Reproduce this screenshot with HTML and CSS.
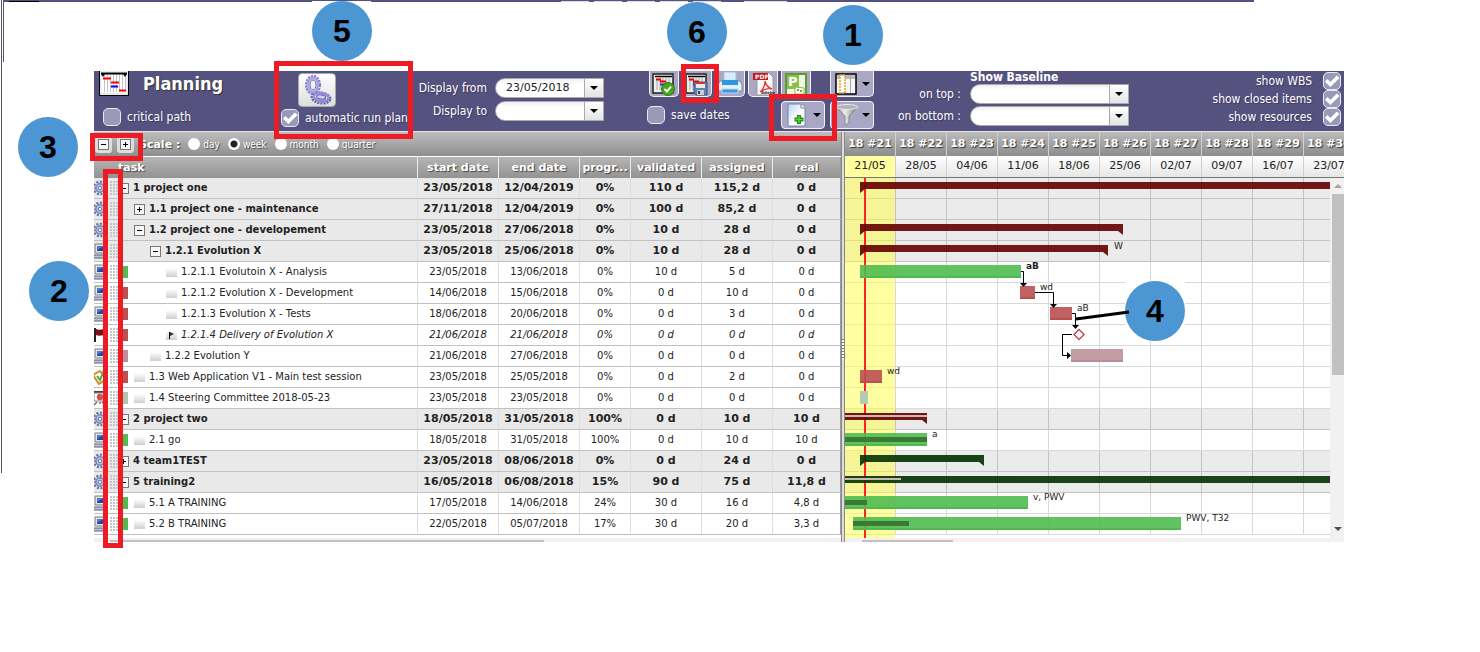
FILE: index.html
```html
<!DOCTYPE html>
<html lang="en">
<head>
<meta charset="utf-8">
<title>Planning</title>
<link rel="stylesheet" href="styles.css">
</head>
<body>
<svg class="defs" aria-hidden="true">
  <defs>
    <pattern id="dots" width="3" height="3" patternUnits="userSpaceOnUse"><rect width="2" height="2" fill="#c4c4c4"/></pattern>
    <linearGradient id="leafFill" x1="0" y1="0" x2="0" y2="1"><stop offset="0" stop-color="#fff"/><stop offset="1" stop-color="#cfcfcf"/></linearGradient>
    <linearGradient id="metal" x1="0" x2="1"><stop offset="0" stop-color="#888"/><stop offset=".4" stop-color="#eee"/><stop offset="1" stop-color="#777"/></linearGradient>
    <linearGradient id="pageFill" x1="0" y1="0" x2="1" y2="1"><stop offset="0" stop-color="#bcd6f2"/><stop offset=".6" stop-color="#fff"/></linearGradient>
  </defs>
  <symbol id="gear" viewBox="0 0 16 16">
    <circle cx="8" cy="8" r="6.3" fill="none" stroke="#5f6f9f" stroke-width="2.2" stroke-dasharray="2 1.6"/>
    <circle cx="8" cy="8" r="4.2" fill="#b9c3df" stroke="#7483b3" stroke-width="1.6"/>
    <circle cx="8" cy="8" r="1.8" fill="#eef" stroke="#6474a6" stroke-width="1"/>
  </symbol>
  <symbol id="pc" viewBox="0 0 16 16">
    <path d="M3 1h11v9H3z" fill="#e6e6dc" stroke="#777" stroke-width="1"/>
    <path d="M5 3h7v5H5z" fill="#1f46a8"/><path d="M5 3h7L5 7z" fill="#4c78d0"/>
    <path d="M2 12h12l-1 3H1z" fill="#bcc4dc" stroke="#555f82" stroke-width="1"/>
  </symbol>
  <symbol id="flag" viewBox="0 0 16 16">
    <path d="M3 1v14" stroke="#222" stroke-width="2"/><path d="M4 2c4 2 7-1 11 1v6c-4-2-7 1-11-1z" fill="#7b1218"/>
  </symbol>
  <symbol id="test" viewBox="0 0 16 16">
    <path d="M1 6l7-4 6 8-7 5z" fill="#fff" stroke="#d08a28" stroke-width="2"/><path d="M5 7l3 4 4-9" fill="none" stroke="#4fae3b" stroke-width="2"/><path d="M10 1l5 2-3 6z" fill="#78aee0"/>
  </symbol>
  <symbol id="meet" viewBox="0 0 16 16">
    <path d="M0 1h16v2H0z" fill="#444"/><path d="M2 3h12v8H2z" fill="#fff" stroke="#888"/><circle cx="8" cy="7" r="3.2" fill="#d8483f"/><path d="M8 7V4l3 2z" fill="#5f88c8"/><path d="M5 12l-3 3M10 12l3 3M8 12v2" stroke="#666" stroke-width="1.3"/>
  </symbol>
  <symbol id="grip" viewBox="0 0 9 14"><rect x="0" y="0" width="8" height="14" fill="url(#dots)"/></symbol>
  <symbol id="minus" viewBox="0 0 11 11"><rect x=".5" y=".5" width="10" height="10" fill="#f7f7f7" stroke="#777"/><path d="M3 5.5h5" stroke="#000"/></symbol>
  <symbol id="plus" viewBox="0 0 11 11"><rect x=".5" y=".5" width="10" height="10" fill="#f7f7f7" stroke="#777"/><path d="M3 5.5h5M5.500 3v5" stroke="#000"/></symbol>
  <symbol id="leaf" viewBox="0 0 11 11"><rect y="1" width="11" height="9" fill="url(#leafFill)"/></symbol>
  <symbol id="mile" viewBox="0 0 11 11"><rect y="1" width="11" height="9" fill="url(#leafFill)"/><path d="M3.500 2v7" stroke="#000"/><path d="M4 2l4 2-4 2z" fill="#333"/></symbol>
  <symbol id="chart" viewBox="0 0 30 25">
    <rect x=".5" y="-3" width="29" height="27.500" fill="#e9e9e9" stroke="#000"/><rect x="2.500" y="1" width="25" height="21" fill="#fff"/>
    <path d="M5.500 3v18M8.500 3v18M11.500 3v18M14.500 3v18M17.500 3v18M20.500 3v18M23.500 3v18M26.500 3v18" stroke="#c4c4c4"/>
    <path d="M2 2.500h26" stroke="#000" stroke-width="2"/><path d="M2 3l2 3 2-3zM24 3l2 3 2-3z"/>
    <path d="M4 7.500h8M12 11.500h8M20 19.500h7" stroke="#f00" stroke-width="2"/><path d="M12 15.500h7" stroke="#00f" stroke-width="2"/>
  </symbol>
  <symbol id="mini" viewBox="0 0 24 24">
    <rect x="1" y="2" width="20" height="19" fill="#eee" stroke="#222" stroke-width="1.500"/>
    <path d="M5 6v12M8 6v12M11 6v12M14 6v12M17 6v12" stroke="#aaa"/><path d="M3 4.500h17" stroke="#000" stroke-width="1.500"/>
    <path d="M4 7.500h5M8 9.500h6" stroke="#e00" stroke-width="2"/><path d="M8 12.500h6" stroke="#22f" stroke-width="2"/>
  </symbol>
</svg>

<div class="frame"><i class="edge"></i><i class="purple"></i><i class="ink"></i><i class="patch"></i>
  <i class="tabs"><b></b><b></b><b></b><b></b><b></b><b class="wide"></b></i></div>

<main class="board">
  <header class="toolbar">
    <section class="title">
      <div class="name"><svg class="logo"><use href="#chart"/></svg><h1>Planning</h1></div>
      <label class="check"><input type="checkbox">critical path</label>
    </section>
    <section class="run">
      <button class="gears" type="button" aria-label="Run plan">
        <svg width="32" height="32" viewBox="0 0 32 32" fill="none">
          <ellipse cx="12" cy="11" rx="6.500" ry="8.500" stroke="#7d78c8" stroke-width="3" stroke-dasharray="2 1"/>
          <ellipse cx="12" cy="11" rx="5" ry="7" stroke="#a8a4e2" stroke-width="2.500"/>
          <ellipse cx="12" cy="11" rx="3" ry="5" stroke="#6f69bb"/>
          <g transform="rotate(8 20 24)">
            <ellipse cx="20" cy="24" rx="9" ry="5" stroke="#6761b4" stroke-width="3" stroke-dasharray="2 1"/>
            <ellipse cx="20" cy="23" rx="7.500" ry="4" stroke="#948fd8" stroke-width="2.500"/>
            <ellipse cx="20" cy="23" rx="4.500" ry="2" stroke="#5b55a6" fill="#d5d3f2"/>
          </g>
        </svg>
      </button>
      <label class="check"><input type="checkbox" checked>automatic run plan</label>
    </section>
    <section class="dates">
      <label for="from">Display from</label><span class="combo"><select id="from"><option>23/05/2018</option></select></span>
      <label for="to">Display to</label><span class="combo"><select id="to"><option></option></select></span>
    </section>
    <section class="tools">
      <div class="tools-top">
        <button class="tool" type="button" aria-label="Validate planning"><svg width="24" height="24"><use href="#mini"/><circle cx="16" cy="17" r="6.500" fill="#45a51e" stroke="#2d7d10"/><path d="M12.500 17l2.500 2.500 4-5" fill="none" stroke="#fff" stroke-width="2"/></svg></button>
        <button class="tool" type="button" aria-label="Save planning"><svg width="24" height="24"><use href="#mini"/><path d="M9 10h13v13H11l-2-2z" fill="#5d84b4" stroke="#34557f"/><path d="M11 10h9v6h-9z" fill="#e9e9e9"/><path d="M11 10h9v2h-9z" fill="#d33"/><path d="M12 18h7v5h-7z" fill="#ccc"/><path d="M13 19h2v3h-2z" fill="#345"/></svg></button>
        <button class="tool" type="button" aria-label="Print"><svg width="26" height="24"><path d="M7 0h12v11H7z" fill="#d7ecfa" stroke="#9cc3e2"/><path d="M3 9h20l2 4v6H1v-6z" fill="#e9eef4" stroke="#7d92ab"/><path d="M5 8h16v5H5z" fill="#2f96e0"/><path d="M5 17h16v4H5z" fill="#3a9be3" stroke="#b8d9f2"/></svg></button>
        <button class="tool" type="button" aria-label="Export PDF"><svg width="24" height="24"><path d="M6 1h12l4 4v18H6z" fill="#fafafa" stroke="#999"/><path d="M2 1h15v7H2z" fill="#c4181b"/><text x="4" y="7" class="pdf">PDF</text><path d="M9 20c3-2 5-7 5-11 1 5 4 7 7 8-4-1-9 1-12 3z" fill="none" stroke="#e33" stroke-width="1.300"/><text x="10" y="22" class="adobe">Adobe</text></svg></button>
        <button class="tool" type="button" aria-label="Export project"><svg width="24" height="24"><path d="M2 2h20v21H2z" fill="#eef6e2" stroke="#5f9c2a" stroke-width="2"/><path d="M3 3h12v14H3z" fill="#8bbd4c"/><text x="4" y="14" class="proj">P</text><path d="M11 15l9 1v6h-9z" fill="#fff" stroke="#88b94f"/><path d="M13 17h2v2h-2zM16 18h2v2h-2z" fill="#6fa533"/></svg></button>
        <button class="tool menu cols" type="button" aria-label="Columns"><svg width="22" height="22"><rect x="1" y="1" width="20" height="20" fill="#f6f6f6" stroke="#000" stroke-width="1.500"/><path d="M2 2h18v4H2z" fill="#bbb"/><path d="M15.500 2v18" stroke="#aaa"/><rect x="5" y="2" width="5" height="18" fill="#fff" stroke="#e6a020" stroke-width="1.500" stroke-dasharray="2 1"/></svg></button>
      </div>
      <div class="tools-low">
        <label class="check"><input type="checkbox">save dates</label>
        <button class="tool menu add" type="button" aria-label="New item"><svg width="22" height="24"><path d="M2 1h13l4 4v18H2z" fill="url(#pageFill)" stroke="#6d86a8"/><path d="M15 1v4h4" fill="#fff" stroke="#6d86a8"/><path d="M13 12v9M8.500 16.500h9" stroke="#1d8a14" stroke-width="4"/><path d="M13 13v7M9.500 16.500h7" stroke="#5fd048" stroke-width="1.500"/></svg></button>
        <button class="tool menu filter" type="button" aria-label="Filter"><svg width="24" height="24"><path d="M1 4l9 9v9l4-2v-7l9-9z" fill="url(#metal)" stroke="#888"/><ellipse cx="12" cy="4" rx="11" ry="2.500" fill="#b5b5b5" stroke="#e8e8e8"/></svg></button>
      </div>
    </section>
    <section class="baseline">
      <h2>Show Baseline</h2>
      <label for="top">on top :</label><span class="combo"><select id="top"><option></option></select></span>
      <label for="bottom">on bottom :</label><span class="combo"><select id="bottom"><option></option></select></span>
    </section>
    <section class="show">
      <label class="check">show WBS<input type="checkbox" checked></label>
      <label class="check">show closed items<input type="checkbox" checked></label>
      <label class="check">show resources<input type="checkbox" checked></label>
    </section>
  </header>

  <div class="panes">
    <section class="list">
      <form class="scale">
        <button type="button" aria-label="Collapse all"><svg width="11" height="11"><use href="#minus"/></svg></button>
        <button type="button" aria-label="Expand all"><svg width="11" height="11"><use href="#plus"/></svg></button>
        <strong>Scale :</strong>
        <label><input type="radio" name="scale">day</label>
        <label><input type="radio" name="scale" checked>week</label>
        <label><input type="radio" name="scale">month</label>
        <label><input type="radio" name="scale">quarter</label>
      </form>
      <table>
        <colgroup><col><col class="c-date"><col class="c-date"><col class="c-prog"><col class="c-work"><col class="c-work"><col class="c-real"></colgroup>
        <thead><tr><th class="first">task</th><th>start date</th><th>end date</th><th>progr...</th><th>validated</th><th>assigned</th><th>real</th></tr></thead>
        <tbody>
          <tr class="group"><td><div class="task l1"><svg class="ico"><use href="#gear"/></svg><svg class="grip"><use href="#grip"/></svg><svg class="box"><use href="#minus"/></svg>1 project one</div></td><td>23/05/2018</td><td>12/04/2019</td><td>0%</td><td>110 d</td><td>115,2 d</td><td>0 d</td></tr>
          <tr class="group"><td><div class="task l2"><svg class="ico"><use href="#gear"/></svg><svg class="grip"><use href="#grip"/></svg><svg class="box"><use href="#plus"/></svg>1.1 project one - maintenance</div></td><td>27/11/2018</td><td>12/04/2019</td><td>0%</td><td>100 d</td><td>85,2 d</td><td>0 d</td></tr>
          <tr class="group"><td><div class="task l2"><svg class="ico"><use href="#gear"/></svg><svg class="grip"><use href="#grip"/></svg><svg class="box"><use href="#minus"/></svg>1.2 project one - developement</div></td><td>23/05/2018</td><td>27/06/2018</td><td>0%</td><td>10 d</td><td>28 d</td><td>0 d</td></tr>
          <tr class="group"><td><div class="task l3"><svg class="ico"><use href="#pc"/></svg><svg class="grip"><use href="#grip"/></svg><svg class="box"><use href="#minus"/></svg>1.2.1 Evolution X</div></td><td>23/05/2018</td><td>25/06/2018</td><td>0%</td><td>10 d</td><td>28 d</td><td>0 d</td></tr>
          <tr><td><div class="task l4 green"><svg class="ico"><use href="#pc"/></svg><svg class="grip"><use href="#grip"/></svg><svg class="box"><use href="#leaf"/></svg>1.2.1.1 Evolutoin X - Analysis</div></td><td>23/05/2018</td><td>13/06/2018</td><td>0%</td><td>10 d</td><td>5 d</td><td>0 d</td></tr>
          <tr><td><div class="task l4 red"><svg class="ico"><use href="#pc"/></svg><svg class="grip"><use href="#grip"/></svg><svg class="box"><use href="#leaf"/></svg>1.2.1.2 Evolution X - Development</div></td><td>14/06/2018</td><td>15/06/2018</td><td>0%</td><td>0 d</td><td>10 d</td><td>0 d</td></tr>
          <tr><td><div class="task l4 red"><svg class="ico"><use href="#pc"/></svg><svg class="grip"><use href="#grip"/></svg><svg class="box"><use href="#leaf"/></svg>1.2.1.3 Evolution X - Tests</div></td><td>18/06/2018</td><td>20/06/2018</td><td>0%</td><td>0 d</td><td>3 d</td><td>0 d</td></tr>
          <tr class="milestone"><td><div class="task l4 red"><svg class="ico"><use href="#flag"/></svg><svg class="grip"><use href="#grip"/></svg><svg class="box"><use href="#mile"/></svg>1.2.1.4 Delivery of Evolution X</div></td><td>21/06/2018</td><td>21/06/2018</td><td>0%</td><td>0 d</td><td>0 d</td><td>0 d</td></tr>
          <tr><td><div class="task l3 mauve"><svg class="ico"><use href="#pc"/></svg><svg class="grip"><use href="#grip"/></svg><svg class="box"><use href="#leaf"/></svg>1.2.2 Evolution Y</div></td><td>21/06/2018</td><td>27/06/2018</td><td>0%</td><td>0 d</td><td>0 d</td><td>0 d</td></tr>
          <tr><td><div class="task l2 red"><svg class="ico"><use href="#test"/></svg><svg class="grip"><use href="#grip"/></svg><svg class="box"><use href="#leaf"/></svg>1.3 Web Application V1 - Main test session</div></td><td>23/05/2018</td><td>25/05/2018</td><td>0%</td><td>0 d</td><td>2 d</td><td>0 d</td></tr>
          <tr><td><div class="task l2 sage"><svg class="ico"><use href="#meet"/></svg><svg class="grip"><use href="#grip"/></svg><svg class="box"><use href="#leaf"/></svg>1.4 Steering Committee 2018-05-23</div></td><td>23/05/2018</td><td>23/05/2018</td><td>0%</td><td>0 d</td><td>0 d</td><td>0 d</td></tr>
          <tr class="group"><td><div class="task l1"><svg class="ico"><use href="#gear"/></svg><svg class="grip"><use href="#grip"/></svg><svg class="box"><use href="#minus"/></svg>2 project two</div></td><td>18/05/2018</td><td>31/05/2018</td><td>100%</td><td>0 d</td><td>10 d</td><td>10 d</td></tr>
          <tr><td><div class="task l2 green"><svg class="ico"><use href="#pc"/></svg><svg class="grip"><use href="#grip"/></svg><svg class="box"><use href="#leaf"/></svg>2.1 go</div></td><td>18/05/2018</td><td>31/05/2018</td><td>100%</td><td>0 d</td><td>10 d</td><td>10 d</td></tr>
          <tr class="group"><td><div class="task l1"><svg class="ico"><use href="#gear"/></svg><svg class="grip"><use href="#grip"/></svg><svg class="box"><use href="#plus"/></svg>4 team1TEST</div></td><td>23/05/2018</td><td>08/06/2018</td><td>0%</td><td>0 d</td><td>24 d</td><td>0 d</td></tr>
          <tr class="group"><td><div class="task l1"><svg class="ico"><use href="#gear"/></svg><svg class="grip"><use href="#grip"/></svg><svg class="box"><use href="#minus"/></svg>5 training2</div></td><td>16/05/2018</td><td>06/08/2018</td><td>15%</td><td>90 d</td><td>75 d</td><td>11,8 d</td></tr>
          <tr><td><div class="task l2 green"><svg class="ico"><use href="#pc"/></svg><svg class="grip"><use href="#grip"/></svg><svg class="box"><use href="#leaf"/></svg>5.1 A TRAINING</div></td><td>17/05/2018</td><td>14/06/2018</td><td>24%</td><td>30 d</td><td>16 d</td><td>4,8 d</td></tr>
          <tr><td><div class="task l2 green"><svg class="ico"><use href="#pc"/></svg><svg class="grip"><use href="#grip"/></svg><svg class="box"><use href="#leaf"/></svg>5.2 B TRAINING</div></td><td>22/05/2018</td><td>05/07/2018</td><td>17%</td><td>30 d</td><td>20 d</td><td>3,3 d</td></tr>
        </tbody>
      </table>
      <div class="hscroll"><i class="thumb-list"></i></div>
    </section>

    <div class="splitter"></div>

    <section class="gantt">
      <div class="weeks">
        <div class="week now"><b>18 #21</b><span>21/05</span></div>
        <div class="week"><b>18 #22</b><span>28/05</span></div>
        <div class="week"><b>18 #23</b><span>04/06</span></div>
        <div class="week"><b>18 #24</b><span>11/06</span></div>
        <div class="week"><b>18 #25</b><span>18/06</span></div>
        <div class="week"><b>18 #26</b><span>25/06</span></div>
        <div class="week"><b>18 #27</b><span>02/07</span></div>
        <div class="week"><b>18 #28</b><span>09/07</span></div>
        <div class="week"><b>18 #29</b><span>16/07</span></div>
        <div class="week"><b>18 #30</b><span>23/07</span></div>
      </div>
      <div class="body">
        <div class="plot">
          <div class="lane group"></div><div class="lane group"></div><div class="lane group"></div><div class="lane group"></div>
          <div class="lane"></div><div class="lane"></div><div class="lane"></div><div class="lane"></div><div class="lane"></div><div class="lane"></div><div class="lane"></div>
          <div class="lane group"></div><div class="lane"></div><div class="lane group"></div><div class="lane group"></div><div class="lane"></div><div class="lane"></div>
          <svg class="bars">
            <rect width="50" height="360" class="today-col"/>
            <rect x="19" width="2" height="360" fill="#f22"/>
            <g class="p-red">
              <path d="M15 4h2000v7H20l-5 4z"/>
              <path d="M15 46h263v11l-5-4H20l-5 4z"/>
              <path d="M15 67h248v11l-5-4H20l-5 4z"/>
              <path d="M0 235h82v11l-5-4H0z"/>
            </g>
            <g class="p-green">
              <path d="M15 277h124v11l-5-4H20l-5 4z"/>
              <path d="M0 298h2000v7H0z"/>
            </g>
            <path d="M0 237h82v2H0zM0 300h56v2H0z" fill="#c9b9b5"/>
            <g class="t-green"><path d="M15 87h161v13H15zM0 255h82v13H0zM0 318h183v13H0zM8 339h328v13H8z"/></g>
            <path class="t-green-base" d="M15 98h161v2H15zM0 266h82v2H0zM0 329h183v2H0zM8 350h328v2H8z"/>
            <path d="M0 259h82v5H0zM0 322h22v5H0zM8 343h56v5H8z" fill="#3c7937"/>
            <path class="t-red" d="M175 108h15v13h-15zM205 129h22v13h-22zM15 192h22v13H15z"/>
            <path class="t-red-base" d="M175 119h15v2h-15zM205 140h22v2h-22zM15 203h22v2H15z"/>
            <path d="M226 171h52v13h-52z" fill="#c39ba3"/><path d="M226 182h52v2h-52z" fill="#b98d96"/>
            <path d="M15 213h8v13h-8z" fill="#b3cbb4"/>
            <path d="M234 151.500l5 5-5 5-5-5z" fill="#fff" stroke="#c05050" stroke-width="1.500"/>
            <path class="link" d="M176 93.500h2.500V106M190 114.500h18.500V127M227 135.500h3.500V148M227 156.500h-9.500v21h5"/>
            <path d="M175 105h7l-3.500 4zM205 126h7l-3.500 4zM227 147h7l-3.500 4zM222 174v7l4-3.500z"/>
            <text x="269" y="71">W</text><text x="181" y="91" class="strong">aB</text><text x="195" y="112">wd</text><text x="232" y="133">aB</text>
            <text x="42" y="196">wd</text><text x="87" y="259">a</text><text x="188" y="322">v, PWV</text><text x="341" y="343">PWV, T32</text>
          </svg>
        </div>
        <div class="vscroll"><i class="up"></i><i class="thumb"></i><i class="down"></i></div>
      </div>
      <div class="hscroll"><i class="thumb-gantt"></i></div>
    </section>
  </div>
</main>

<div class="mark m5"></div><div class="mark m6"></div><div class="mark mnew"></div><div class="mark m3"></div><div class="mark m2"></div>
<div class="bubble b1">1</div><div class="bubble b2">2</div><div class="bubble b3">3</div><div class="bubble b4"><span>4</span></div><div class="bubble b5">5</div><div class="bubble b6">6</div>
<svg class="pointer" width="56" height="12"><path d="M1 9L54 2" stroke="#000" stroke-width="3"/></svg>
</body>
</html>
```
FILE: styles.css
```css
* { box-sizing: border-box; }
body { margin: 0; position: relative; min-height: 100vh; background: #fff; color: #222; font: 10px "DejaVu Sans", Verdana, sans-serif; }
.defs { position: absolute; width: 0; height: 0; }
h1, h2 { margin: 0; }
button { padding: 0; }

/* window frame remains */
.frame i { position: absolute; display: block; }
.edge { left: 1px; top: 0; width: 1px; height: 473px; background: #555; }
.purple { left: 3px; top: 0; width: 1251px; height: 62px; border-top: 2px solid #55527f; border-left: 1px solid #55527f; }
.ink { left: 9px; top: 1px; width: 30px; height: 1px; background: #000; }
.patch { left: 312px; top: 1px; width: 59px; height: 1px; background: #fff; }
.tabs { left: 561px; top: 1px; gap: 5px; }
.frame .tabs { display: flex; }
.tabs b { width: 28px; height: 1px; background: #dcdce8; }
.tabs .wide { width: 43px; margin-left: 18px; }

.board { padding: 71px 136px 0 94px; }

/* toolbar */
.toolbar { display: flex; height: 60px; background: #55527f; color: #fff; font: 12px "DejaVu Sans Condensed", "DejaVu Sans", sans-serif; overflow: hidden; }
.toolbar label { white-space: nowrap; text-shadow: 1px 1px 1px #3a3760; }
.title { flex: 0 0 181px; padding-left: 5px; }
.name { display: flex; gap: 14px; height: 25px; align-items: center; }
.logo { width: 30px; height: 25px; }
.name h1 { font-size: 18px; line-height: 24px; text-shadow: 1px 1px 1px #333; }
.check { display: flex; align-items: center; gap: 6px; height: 18px; }
.title .check { margin: 12px 0 0 4px; }
.check input { appearance: none; position: relative; margin: 0; width: 18px; height: 18px; flex: none; border: 1px solid #e8e8f2; border-radius: 5px; background: #9b99b8; }
.check input:checked::after { content: ""; position: absolute; inset: 0; background: #fff; clip-path: polygon(6% 54%, 22% 38%, 40% 56%, 80% 16%, 97% 32%, 40% 88%); }
.run { flex: 0 0 139px; padding: 2px 0 0 6px; }
.gears { display: block; margin-left: 17px; width: 38px; height: 34px; border: 1px solid #aaa; border-radius: 4px; background: linear-gradient(#fff, #ddd); }
.run .check { margin-top: 2px; }
.dates { display: grid; grid-template-columns: 73px 109px; grid-auto-rows: 21px; gap: 2px 8px; align-items: center; text-align: right; padding-top: 6px; align-content: start; }
.combo { position: relative; display: block; height: 20px; }
.combo select { appearance: none; display: block; width: 100%; height: 20px; padding: 0 20px 0 10px; border: 1px solid #aaa; border-radius: 10px 0 0 10px; background: linear-gradient(#f0f0f2, #fff 5px); font: 11px "DejaVu Sans", sans-serif; color: #222; }
.combo::before { content: ""; position: absolute; right: 1px; top: 1px; width: 18px; height: 18px; border-left: 1px solid #aaa; background: linear-gradient(#fff, #e4e4e4); pointer-events: none; }
.combo::after, .menu::after { content: ""; border: solid transparent; border-width: 4px 4px 0; border-top-color: #000; }
.combo::after { position: absolute; right: 6px; top: 8px; pointer-events: none; }
.tools { margin-left: 43px; flex: none; }
.tools-top { display: flex; gap: 3px; padding-left: 2px; }
.tool { display: flex; align-items: center; justify-content: center; width: 30px; height: 26px; border: 1px solid #f2f2f8; border-radius: 4px; background: #a9a7c3; }
.tools-top .tool { border-top: 0; border-radius: 0 0 5px 5px; }
.tool.menu { gap: 5px; width: 44px; }
.tool.cols { margin-left: 16px; }
.tools-low { display: flex; align-items: center; margin-top: 4px; }
.tools-low .tool { height: 28px; }
.tools-low .check { width: 134px; }
.tool.add { margin-right: 5px; }
.tool.filter { gap: 3px; }
.pdf { font: bold 6px "DejaVu Sans", sans-serif; fill: #fff; }
.adobe { font: bold 4px "DejaVu Sans", sans-serif; fill: #333; }
.proj { font: bold 13px "DejaVu Sans", sans-serif; fill: #fff; }
.baseline { display: grid; grid-template-columns: 74px 159px; grid-template-rows: 12px 22px 22px; column-gap: 9px; margin-left: 13px; align-content: start; align-items: center; text-align: right; }
.baseline h2 { grid-column: 2; text-align: left; font-size: 12px; line-height: 12px; }
.baseline label { line-height: 20px; }
.show { margin-left: auto; padding: 1px 3px 0 0; }
.show .check { justify-content: flex-end; gap: 11px; }

/* panes */
.panes { display: flex; border-top: 1px solid #e4e4e4; }
.list { flex: 0 0 747px; min-width: 0; }
.scale { display: flex; align-items: center; height: 25px; background: linear-gradient(#bdbdbd, #8f8f8f); border-bottom: 1px solid #fff; color: #fff; text-shadow: 1px 1px 1px #444; }
.scale button { width: 17px; height: 17px; margin: 0 4px 0 1px; border: 0; border-radius: 3px; background: #ddd; line-height: 0; }
.scale strong { font-size: 11px; margin: 0 8px 0 1px; }
.scale label { display: flex; align-items: center; gap: 3px; margin-right: 8px; font: 10px "DejaVu Sans Condensed", "DejaVu Sans", sans-serif; }
.scale input { appearance: none; margin: 0; width: 12px; height: 12px; border-radius: 50%; background: #fff; }
.scale input:checked { background: radial-gradient(circle, #222 3px, #fff 4px); }
.list table { width: 100%; table-layout: fixed; border-collapse: separate; border-spacing: 0; }
.c-date { width: 81px; } .c-prog { width: 51px; } .c-work { width: 71px; } .c-real { width: 68px; }
.list th, .list td { height: 21px; padding: 0; text-align: center; white-space: nowrap; border-right: 1px solid #ddd; border-bottom: 1px solid #c0c0c0; line-height: 20px; overflow: hidden; }
.list th { background: linear-gradient(#b5b5b5, #939393); border-bottom: 0; border-color: #eee; color: #fff; font-size: 11px; text-shadow: 1px 1px 1px #444; }
.list th.first { text-align: left; padding-left: 24px; }
.list td:last-child, .list th:last-child { border-right: 1px solid #999; }
.group td { background: #e9e9e9; font-weight: bold; }
.list .group td + td { font-size: 11px; }
.milestone td { font-style: italic; }
.task { display: flex; align-items: center; height: 20px; background-repeat: no-repeat; background-position: 25px 4px; background-size: 9px 12px; }
.task .ico { width: 16px; height: 16px; margin-left: -2px; flex: none; }
.task .grip { width: 9px; height: 14px; margin-left: 2px; flex: none; }
.task .box { width: 11px; height: 11px; margin-right: 4px; flex: none; }
.l1 .box { margin-left: -1px; } .l2 .box { margin-left: 15px; } .l3 .box { margin-left: 31px; } .l4 .box { margin-left: 47px; }
.green { background-image: linear-gradient(#50bb50, #50bb50); }
.red { background-image: linear-gradient(#bb5050, #bb5050); }
.mauve { background-image: linear-gradient(#bb8f99, #bb8f99); }
.sage { background-image: linear-gradient(#adc7ad, #adc7ad); }
.hscroll { height: 4px; padding-top: 2px; background: #f1f1f1; }
.list .hscroll { margin-top: 3px; }
.hscroll i { display: block; height: 2px; background: #c1c1c1; }
.thumb-list { width: 434px; margin-left: 16px; }
.thumb-gantt { width: 91px; margin-left: 17px; }
.splitter { flex: 0 0 4px; border: 1px solid #888; border-width: 0 1px; background: repeating-linear-gradient(#777 0 1px, #fff 1px 3px) center 207px / 2px 20px no-repeat, #ddd; }

.gantt { flex: 1; min-width: 0; }
.weeks { display: flex; overflow: hidden; height: 46px; border-bottom: 1px solid #777; }
.week { flex: 0 0 51px; text-align: center; border-right: 1px solid #d0d0d0; }
.week b, .week span { display: block; white-space: nowrap; }
.week b { height: 24px; line-height: 24px; background: linear-gradient(#bbb, #8c8c8c); color: #fff; font-size: 11px; text-shadow: 1px 1px 1px #333; }
.week span { height: 21px; line-height: 20px; background: linear-gradient(#fff, #e6e6e6); font-size: 11px; }
.week.now span { background: #ffff9f; }
.body { display: flex; }
.plot { position: relative; flex: 1; min-width: 0; overflow: hidden; padding-bottom: 3px; }
.lane { height: 21px; border-bottom: 1px solid #d9d9d9; background: repeating-linear-gradient(to right, transparent 0 50px, #d9d9d9 50px 51px); }
.lane.group { border-color: #c3c3c3; background: repeating-linear-gradient(to right, #ebebeb 0 50px, #c3c3c3 50px 51px); }
.bars { position: absolute; left: 0; top: 0; width: 100%; height: 100%; }
.bars text { font: 9px "DejaVu Sans", sans-serif; fill: #222; }
.bars .strong { font-weight: bold; }
.today-col { fill: #ffff44; opacity: .5; }
.p-red { fill: #650000; opacity: .9; }
.p-green { fill: #083505; opacity: .92; }
.t-green { fill: #50bb50; opacity: .9; }
.t-green-base { fill: #4fb84f; }
.t-red { fill: #bb5050; opacity: .9; }
.t-red-base { fill: #b84f4f; }
.link { fill: none; stroke: #000; }
.vscroll { display: flex; flex-direction: column; align-items: center; flex: 0 0 14px; background: #f1f1f1; padding: 6px 0 7px 2px; }
.vscroll .up { border: solid transparent; border-width: 0 4px 4px; border-bottom-color: #a3a3a3; }
.vscroll .thumb { width: 12px; height: 181px; margin-top: 6px; background: #c1c1c1; }
.vscroll .down { margin-top: auto; border: solid transparent; border-width: 4px 4px 0; border-top-color: #505050; }

/* annotations */
.mark { position: absolute; border: 5px solid #ed1c24; }
.m5 { left: 274px; top: 61px; width: 139px; height: 78px; }
.m6 { left: 681px; top: 64px; width: 38px; height: 39px; }
.mnew { left: 769px; top: 94px; width: 68px; height: 47px; }
.m3 { left: 90px; top: 133px; width: 53px; height: 28px; }
.m2 { left: 103px; top: 169px; width: 20px; height: 379px; }
.bubble { position: absolute; width: 60px; height: 60px; border-radius: 50%; background: #4b96d3; color: #000; font: bold 32px/60px "Liberation Sans", Arial, sans-serif; text-align: center; }
.b1 { left: 823px; top: 5px; } .b2 { left: 29px; top: 261px; } .b3 { left: 18px; top: 117px; }
.b5 { left: 312px; top: 1px; } .b6 { left: 667px; top: 2px; }
.b4 { left: 1125px; top: 281px; border-radius: 0; background: #fff; }
.b4 span { display: block; border-radius: 50%; background: #4b96d3; }
.pointer { position: absolute; left: 1075px; top: 310px; }
```
